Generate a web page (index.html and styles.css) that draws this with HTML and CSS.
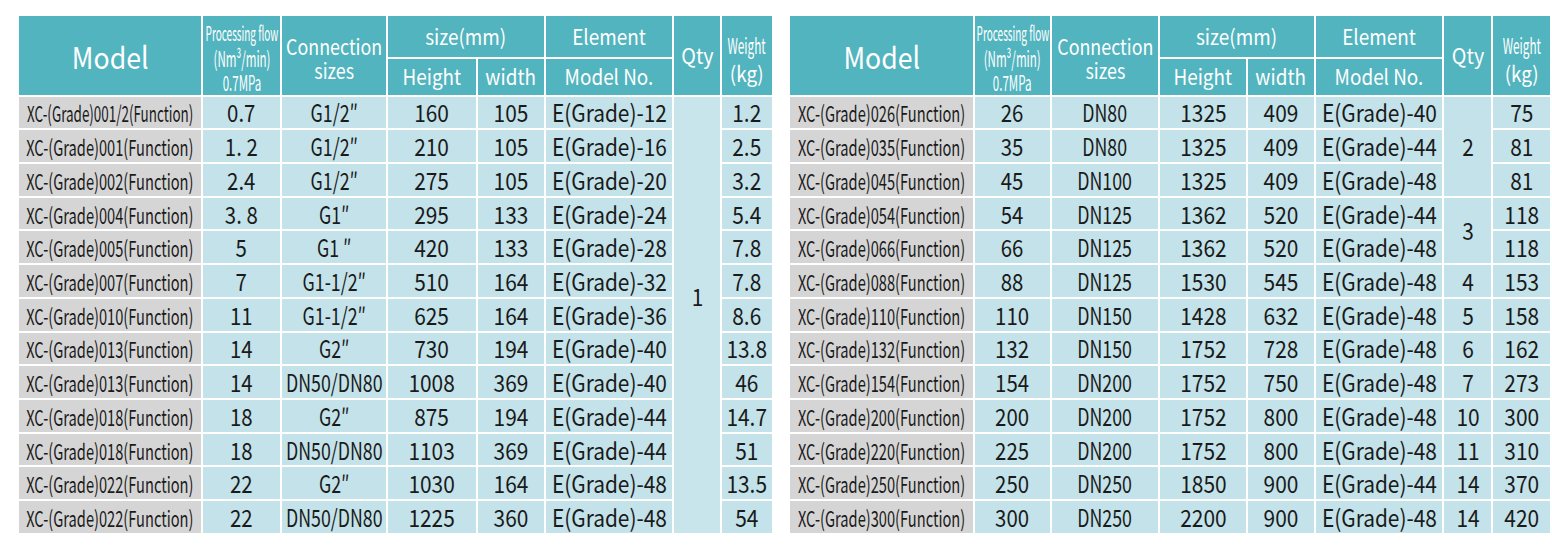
FILE: index.html
```html
<!DOCTYPE html>
<html>
<head>
<meta charset="utf-8">
<link rel="stylesheet" href="styles.css">
</head>
<body>
<div class="page">
  <table class="spec spec-left">
    <colgroup>
      <col class="c-model-l"><col class="c-flow-l"><col class="c-conn-l"><col class="c-h-l"><col class="c-w-l"><col class="c-el-l"><col class="c-qty-l"><col class="c-kg-l">
    </colgroup>
    <thead>
      <tr class="h1">
        <th rowspan="2" class="th-model"><span>Model</span></th>
        <th rowspan="2" class="th-flow"><span class="fl1">Processing flow</span><span class="fl2">(Nm³/min)</span><span class="fl2">0.7MPa</span></th>
        <th rowspan="2" class="th-conn"><span>Connection<br>sizes</span></th>
        <th colspan="2"><span>size(mm)</span></th>
        <th><span>Element</span></th>
        <th rowspan="2" class="th-qty"><span>Qty</span></th>
        <th rowspan="2" class="th-kg"><span class="kg1">Weight</span><span class="kg2">(kg)</span></th>
      </tr>
      <tr class="h2">
        <th><span>Height</span></th>
        <th><span>width</span></th>
        <th><span>Model No.</span></th>
      </tr>
    </thead>
    <tbody>
      <tr><td class="m m-long"><span>XC-(Grade)001/2(Function)</span></td><td class="f"><span>0.7</span></td><td class="cn"><span>G1/2″</span></td><td><span>160</span></td><td><span>105</span></td><td><span>E(Grade)-12</span></td><td rowspan="13" class="qty-all"><span>1</span></td><td><span>1.2</span></td></tr>
      <tr><td class="m"><span>XC-(Grade)001(Function)</span></td><td class="f"><span>1. 2</span></td><td class="cn"><span>G1/2″</span></td><td><span>210</span></td><td><span>105</span></td><td><span>E(Grade)-16</span></td><td><span>2.5</span></td></tr>
      <tr><td class="m"><span>XC-(Grade)002(Function)</span></td><td class="f"><span>2.4</span></td><td class="cn"><span>G1/2″</span></td><td><span>275</span></td><td><span>105</span></td><td><span>E(Grade)-20</span></td><td><span>3.2</span></td></tr>
      <tr><td class="m"><span>XC-(Grade)004(Function)</span></td><td class="f"><span>3. 8</span></td><td class="cn"><span>G1″</span></td><td><span>295</span></td><td><span>133</span></td><td><span>E(Grade)-24</span></td><td><span>5.4</span></td></tr>
      <tr><td class="m"><span>XC-(Grade)005(Function)</span></td><td class="f"><span>5</span></td><td class="cn"><span>G1 ″</span></td><td><span>420</span></td><td><span>133</span></td><td><span>E(Grade)-28</span></td><td><span>7.8</span></td></tr>
      <tr><td class="m"><span>XC-(Grade)007(Function)</span></td><td class="f"><span>7</span></td><td class="cn"><span>G1-1/2″</span></td><td><span>510</span></td><td><span>164</span></td><td><span>E(Grade)-32</span></td><td><span>7.8</span></td></tr>
      <tr><td class="m"><span>XC-(Grade)010(Function)</span></td><td class="f"><span>11</span></td><td class="cn"><span>G1-1/2″</span></td><td><span>625</span></td><td><span>164</span></td><td><span>E(Grade)-36</span></td><td><span>8.6</span></td></tr>
      <tr><td class="m"><span>XC-(Grade)013(Function)</span></td><td class="f"><span>14</span></td><td class="cn"><span>G2″</span></td><td><span>730</span></td><td><span>194</span></td><td><span>E(Grade)-40</span></td><td><span>13.8</span></td></tr>
      <tr><td class="m"><span>XC-(Grade)013(Function)</span></td><td class="f"><span>14</span></td><td class="cn"><span>DN50/DN80</span></td><td><span>1008</span></td><td><span>369</span></td><td><span>E(Grade)-40</span></td><td><span>46</span></td></tr>
      <tr><td class="m"><span>XC-(Grade)018(Function)</span></td><td class="f"><span>18</span></td><td class="cn"><span>G2″</span></td><td><span>875</span></td><td><span>194</span></td><td><span>E(Grade)-44</span></td><td><span>14.7</span></td></tr>
      <tr><td class="m"><span>XC-(Grade)018(Function)</span></td><td class="f"><span>18</span></td><td class="cn"><span>DN50/DN80</span></td><td><span>1103</span></td><td><span>369</span></td><td><span>E(Grade)-44</span></td><td><span>51</span></td></tr>
      <tr><td class="m"><span>XC-(Grade)022(Function)</span></td><td class="f"><span>22</span></td><td class="cn"><span>G2″</span></td><td><span>1030</span></td><td><span>164</span></td><td><span>E(Grade)-48</span></td><td><span>13.5</span></td></tr>
      <tr><td class="m"><span>XC-(Grade)022(Function)</span></td><td class="f"><span>22</span></td><td class="cn"><span>DN50/DN80</span></td><td><span>1225</span></td><td><span>360</span></td><td><span>E(Grade)-48</span></td><td><span>54</span></td></tr>
    </tbody>
  </table>

  <table class="spec spec-right">
    <colgroup>
      <col class="c-model-r"><col class="c-flow-r"><col class="c-conn-r"><col class="c-h-r"><col class="c-w-r"><col class="c-el-r"><col class="c-qty-r"><col class="c-kg-r">
    </colgroup>
    <thead>
      <tr class="h1">
        <th rowspan="2" class="th-model"><span>Model</span></th>
        <th rowspan="2" class="th-flow"><span class="fl1">Processing flow</span><span class="fl2">(Nm³/min)</span><span class="fl2">0.7MPa</span></th>
        <th rowspan="2" class="th-conn"><span>Connection<br>sizes</span></th>
        <th colspan="2"><span>size(mm)</span></th>
        <th><span>Element</span></th>
        <th rowspan="2" class="th-qty"><span>Qty</span></th>
        <th rowspan="2" class="th-kg"><span class="kg1">Weight</span><span class="kg2">(kg)</span></th>
      </tr>
      <tr class="h2">
        <th><span>Height</span></th>
        <th><span>width</span></th>
        <th><span>Model No.</span></th>
      </tr>
    </thead>
    <tbody>
      <tr><td class="m"><span>XC-(Grade)026(Function)</span></td><td class="f"><span>26</span></td><td class="cn"><span>DN80</span></td><td><span>1325</span></td><td><span>409</span></td><td><span>E(Grade)-40</span></td><td rowspan="3"><span>2</span></td><td><span>75</span></td></tr>
      <tr><td class="m"><span>XC-(Grade)035(Function)</span></td><td class="f"><span>35</span></td><td class="cn"><span>DN80</span></td><td><span>1325</span></td><td><span>409</span></td><td><span>E(Grade)-44</span></td><td><span>81</span></td></tr>
      <tr><td class="m"><span>XC-(Grade)045(Function)</span></td><td class="f"><span>45</span></td><td class="cn"><span>DN100</span></td><td><span>1325</span></td><td><span>409</span></td><td><span>E(Grade)-48</span></td><td><span>81</span></td></tr>
      <tr><td class="m"><span>XC-(Grade)054(Function)</span></td><td class="f"><span>54</span></td><td class="cn"><span>DN125</span></td><td><span>1362</span></td><td><span>520</span></td><td><span>E(Grade)-44</span></td><td rowspan="2"><span>3</span></td><td><span>118</span></td></tr>
      <tr><td class="m"><span>XC-(Grade)066(Function)</span></td><td class="f"><span>66</span></td><td class="cn"><span>DN125</span></td><td><span>1362</span></td><td><span>520</span></td><td><span>E(Grade)-48</span></td><td><span>118</span></td></tr>
      <tr><td class="m"><span>XC-(Grade)088(Function)</span></td><td class="f"><span>88</span></td><td class="cn"><span>DN125</span></td><td><span>1530</span></td><td><span>545</span></td><td><span>E(Grade)-48</span></td><td><span>4</span></td><td><span>153</span></td></tr>
      <tr><td class="m"><span>XC-(Grade)110(Function)</span></td><td class="f"><span>110</span></td><td class="cn"><span>DN150</span></td><td><span>1428</span></td><td><span>632</span></td><td><span>E(Grade)-48</span></td><td><span>5</span></td><td><span>158</span></td></tr>
      <tr><td class="m"><span>XC-(Grade)132(Function)</span></td><td class="f"><span>132</span></td><td class="cn"><span>DN150</span></td><td><span>1752</span></td><td><span>728</span></td><td><span>E(Grade)-48</span></td><td><span>6</span></td><td><span>162</span></td></tr>
      <tr><td class="m"><span>XC-(Grade)154(Function)</span></td><td class="f"><span>154</span></td><td class="cn"><span>DN200</span></td><td><span>1752</span></td><td><span>750</span></td><td><span>E(Grade)-48</span></td><td><span>7</span></td><td><span>273</span></td></tr>
      <tr><td class="m"><span>XC-(Grade)200(Function)</span></td><td class="f"><span>200</span></td><td class="cn"><span>DN200</span></td><td><span>1752</span></td><td><span>800</span></td><td><span>E(Grade)-48</span></td><td><span>10</span></td><td><span>300</span></td></tr>
      <tr><td class="m"><span>XC-(Grade)220(Function)</span></td><td class="f"><span>225</span></td><td class="cn"><span>DN200</span></td><td><span>1752</span></td><td><span>800</span></td><td><span>E(Grade)-48</span></td><td><span>11</span></td><td><span>310</span></td></tr>
      <tr><td class="m"><span>XC-(Grade)250(Function)</span></td><td class="f"><span>250</span></td><td class="cn"><span>DN250</span></td><td><span>1850</span></td><td><span>900</span></td><td><span>E(Grade)-44</span></td><td><span>14</span></td><td><span>370</span></td></tr>
      <tr><td class="m"><span>XC-(Grade)300(Function)</span></td><td class="f"><span>300</span></td><td class="cn"><span>DN250</span></td><td><span>2200</span></td><td><span>900</span></td><td><span>E(Grade)-48</span></td><td><span>14</span></td><td><span>420</span></td></tr>
    </tbody>
  </table>
</div>
</body>
</html>
```

FILE: styles.css
```css
html, body {
  margin: 0;
  padding: 0;
  background: #ffffff;
}

.page {
  display: flex;
  gap: 14px;
  padding: 14px 0 0 17px;
  font-family: "Noto Sans CJK SC", "Noto Sans", sans-serif;
}

.spec {
  table-layout: fixed;
  border-collapse: separate;
  border-spacing: 2px;
  background: #ffffff;
  flex: none;
}

.spec-left { width: 757px; }
.spec-right { width: 764px; }

.c-model-l { width: 182px; }
.c-flow-l { width: 77px; }
.c-conn-l { width: 104px; }
.c-h-l { width: 88px; }
.c-w-l { width: 66px; }
.c-el-l { width: 126px; }
.c-qty-l { width: 46px; }
.c-kg-l { width: 50px; }

.c-model-r { width: 183px; }
.c-flow-r { width: 75px; }
.c-conn-r { width: 106px; }
.c-h-r { width: 86px; }
.c-w-r { width: 66px; }
.c-el-r { width: 126px; }
.c-qty-r { width: 47px; }
.c-kg-r { width: 57px; }

.spec th,
.spec td {
  padding: 0;
  text-align: center;
  vertical-align: middle;
  overflow: visible;
  white-space: nowrap;
}

/* condensed text: each cell's text box is widened by 1/s and squeezed back by s */
.spec th > span,
.spec td > span {
  display: block;
  width: calc(100% / var(--s));
  margin-left: calc((100% - 100% / var(--s)) / 2);
  transform: scaleX(var(--s));
}

.spec th {
  --s: 0.9;
  background: #52b4be;
  color: #ffffff;
  font-weight: 400;
  font-size: 21px;
  line-height: 1;
}

.h1 { height: 41px; }
.h2 { height: 35px; }

.spec .th-model {
  font-size: 30px;
  padding-top: 2px;
  --s: 0.89;
}

.spec .th-conn {
  font-size: 21px;
  line-height: 24px;
  padding-top: 5px;
  --s: 0.85;
}

.spec .th-qty {
  --s: 0.94;
}

.spec .th-flow {
  line-height: 24.5px;
  padding-top: 5px;
}

.spec .th-flow .fl1 {
  font-size: 20px;
  --s: 0.5;
}

.spec .th-flow .fl2 {
  font-size: 21px;
  --s: 0.55;
}

.spec .th-kg {
  line-height: 28px;
  padding-top: 7px;
}

.spec .th-kg .kg1 {
  font-size: 21px;
  --s: 0.56;
}

.spec .th-kg .kg2 {
  font-size: 21px;
  --s: 0.9;
}

.spec td {
  --s: 0.87;
  background: #c3e2e9;
  color: #1a1a1a;
  font-size: 24px;
  line-height: 1;
  height: 31.7px;
}

.spec td.f {
  --s: 0.85;
}

.spec td.cn {
  --s: 0.74;
}

.spec td.m {
  --s: 0.665;
  background: #d5d5d5;
  font-size: 22px;
}

.spec td.m-long {
  --s: 0.61;
}

.spec td.qty-all {
  padding-bottom: 38px;
  background: #c8e5ec;
}
```
